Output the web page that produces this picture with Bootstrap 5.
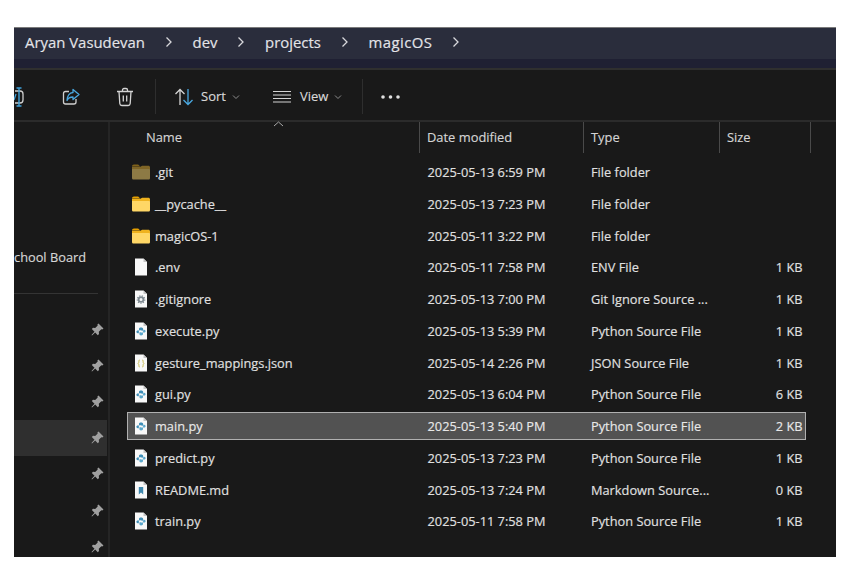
<!doctype html>
<html lang="en">
<head>
<meta charset="utf-8">
<title>magicOS</title>
<link rel="stylesheet" href="https://cdn.jsdelivr.net/npm/bootstrap@5.3.0/dist/css/bootstrap.min.css">
<style>
body{background:#fff;margin:0;overflow:hidden}
.win{margin:27px 20px 0 14px;width:822px;height:530px;background:#191919;color:#e0e0e0;font-family:"Open Sans","Noto Sans",sans-serif;font-size:12.8px;overflow:hidden;border-top:1px solid #7a7a7a;-webkit-text-stroke:.15px}
.crumbs{height:31px;background:#2a2d3c;color:#e4e4e8;font-size:14.9px;padding:0 0 3px 11px}
.crumbs svg{margin:0 19.800px;width:8px;height:12px}
.crumb-wide{letter-spacing:.45px}
.crumb-tail{height:9px;background:#1f2033}
.tools{height:54px;padding-top:3px;border-top:2px solid #2f2f2f;border-bottom:2px solid #2b2b2b;font-size:13px;color:#d8d8d8}
.tool-sep{width:1px;height:35px;background:#2e2e2e}
.t-clip{width:13px;height:20px}
.t-share{width:18px;height:18px;margin-left:35px}
.t-trash{width:18px;height:20px;margin-left:36px}
.t-sep1{margin:0 18px 0 21px}
.t-sort{width:20px;height:20px}
.t-lab{margin-left:7px}
.t-lab-view{margin-left:9px}
.t-chev{width:8px;height:6px;margin-left:6px}
.t-view{width:18px;height:14px;margin-left:33px}
.t-sep2{margin:0 18px 0 20px}
.t-dots{width:19px;height:4px}
.body-row{height:calc(100% - 94px)}
.side{width:96px;flex:none;border-right:2px solid #252525;color:#d6d6d6}
.side-name{height:21px;margin-top:126px;padding-right:22px;white-space:nowrap}
.side-rule{height:1px;background:#343434;margin:24px 10px 0 0}
.pins{margin-top:17px;margin-right:1px}
.pin-row{height:36.2px;padding-right:3px;flex:none}
.pin-row.on{background:#2f2f2f}
.pin-row svg{width:13px;height:13px}
.main{min-width:0;position:relative}
.head{display:grid;grid-template-columns:310px 164px 136px 91px;height:29px;font-size:12.9px;color:#d4d4d4}
.head>div{border-right:1px solid #4a4a4a;padding-left:7px;line-height:31px}
.head>div:first-child{padding-left:36px}
.sort-up{position:absolute;left:163px;top:-1px;width:11px;height:6px}
.list{padding:7px 0 0 17px;gap:3.77px}
.frow{display:grid;grid-template-columns:293px 163px 136px 87px;height:28px;line-height:26px;border:1px solid transparent;width:679px}
.frow.sel{background:#525252;border-color:#b0b0b0;color:#e8e8e8}
.cell-a{padding-left:4px;gap:5px;min-width:0}
.cell-a svg{width:18px;height:18px;flex:none}
.cell-b{padding-left:6.500px;white-space:nowrap}
.cell-b+.cell-b{padding-left:7px}
.cell-c{padding-right:4.500px;text-align:right}
</style>
</head>
<body>
<svg width="0" height="0" class="d-none" aria-hidden="true">
<defs>
<symbol id="folder" viewBox="0 0 18 18"><path d="M0 3.500C0 2.300.8 1.500 2 1.500h4.200l2 2H0z" fill="#e6a000"/><path d="M0 5h16.400c.9 0 1.600.7 1.600 1.600v8.300c0 .9-.7 1.600-1.600 1.600H1.600C.7 16.500 0 15.800 0 14.900z" fill="#ffd766"/><path d="M0 3.800h8.400l1.700-1.100h6.300c.9 0 1.600.7 1.600 1.600V6H0z" fill="#efb21e"/></symbol>
<symbol id="folder-dim" viewBox="0 0 18 18"><path d="M0 3.500C0 2.300.8 1.500 2 1.500h4.200l2 2H0z" fill="#80621a"/><path d="M0 5h16.400c.9 0 1.600.7 1.600 1.600v8.300c0 .9-.7 1.600-1.600 1.600H1.600C.7 16.500 0 15.800 0 14.900z" fill="#8d7a45"/><path d="M0 3.800h8.400l1.700-1.100h6.300c.9 0 1.600.7 1.600 1.600V6H0z" fill="#7f6526"/></symbol>
<symbol id="page" viewBox="0 0 18 18"><path d="M3 .5h8.500L15 4v13.500H3z" fill="#f8f8f8"/><path d="M11.500.5V4H15z" fill="#c4c4c4"/></symbol>
<symbol id="gear" viewBox="0 0 18 18"><use href="#page"/><circle cx="9" cy="9.500" r="2.400" fill="none" stroke="#7f8a92" stroke-width="1.800"/><circle cx="9" cy="9.500" r="3.800" fill="none" stroke="#7f8a92" stroke-width="1.100" stroke-dasharray="1.300 1.300"/></symbol>
<symbol id="py" viewBox="0 0 18 18"><use href="#page"/><path d="M9 5.500c-1.500 0-2 .6-2 1.400v1h2.500v.6H5.800c-.9 0-1.400.7-1.400 1.300s.5 1.400 1.400 1.400h1V9.800c0-.6.5-1 1.100-1h2.200c.6 0 1-.5 1-1V6.900c0-.8-.6-1.400-2.100-1.400z" fill="#3f8fb8"/><path d="M9 13.500c1.500 0 2-.6 2-1.400v-1H8.500v-.6h3.700c.9 0 1.400-.7 1.400-1.300s-.5-1.400-1.400-1.400h-1v1.200c0 .6-.5 1-1.100 1H8.400c-.6 0-1 .5-1 1v1.100c0 .8.4 1.400 1.600 1.400z" fill="#5ca8cc"/></symbol>
<symbol id="json" viewBox="0 0 18 18"><use href="#page"/><path d="M7.800 6c-1 0-.9.800-.9 1.500s-.1 1.500-.8 2c.7.500.8 1.300.8 2s-.1 1.500.9 1.500M10.200 6c1 0 .9.800.9 1.500s.1 1.500.8 2c-.7.500-.8 1.300-.8 2s.1 1.500-.9 1.500" fill="none" stroke="#c7b94a" stroke-width="1"/></symbol>
<symbol id="md" viewBox="0 0 18 18"><use href="#page"/><path d="M6.800 6h4.400v7.500L9 11.500l-2.200 2z" fill="#3f88ae"/></symbol>
<symbol id="pin" viewBox="0 0 13 13"><path d="M7.500.5l5 5-1.200 1-1-.2L7.800 8.800l.2 2.200-1.200 1.200-2.600-2.700L1 12.500l-.5-.5 3-3.300L.8 6 2 4.800l2.200.2L6.700 2.500l-.3-1z" fill="#a0a0a0"/></symbol>
<symbol id="chev" viewBox="0 0 8 6"><path d="M1 1.500l3 3 3-3" fill="none" stroke="#8c8c8c" stroke-width="1"/></symbol>
</defs>
</svg>

<div class="win">
  <div class="crumbs d-flex align-items-center">
    <span>Aryan Vasudevan</span>
    <svg viewBox="0 0 8 12"><path d="M1.500 1.500L6 6l-4.500 4.500" fill="none" stroke="#d8d8dc" stroke-width="1.300"/></svg>
    <span>dev</span>
    <svg viewBox="0 0 8 12"><path d="M1.500 1.500L6 6l-4.500 4.500" fill="none" stroke="#d8d8dc" stroke-width="1.300"/></svg>
    <span>projects</span>
    <svg viewBox="0 0 8 12"><path d="M1.500 1.500L6 6l-4.500 4.500" fill="none" stroke="#d8d8dc" stroke-width="1.300"/></svg>
    <span class="crumb-wide">magicOS</span>
    <svg viewBox="0 0 8 12"><path d="M1.500 1.500L6 6l-4.500 4.500" fill="none" stroke="#d8d8dc" stroke-width="1.300"/></svg>
  </div>
  <div class="crumb-tail"></div>
  <div class="tools d-flex align-items-center">
    <svg class="t-clip" viewBox="0 0 13 20"><path d="M1 4h5c2 0 3 1 3 3v6c0 2-1 3-3 3H1" fill="none" stroke="#cfcfcf" stroke-width="1.300"/><path d="M5 1v18M2.500 1h5M2.500 19h5" fill="none" stroke="#3fa0d8" stroke-width="1.400"/><path d="M0 13l2-6" stroke="#3fa0d8" stroke-width="1.300"/></svg>
    <svg class="t-share" viewBox="0 0 18 18"><path d="M7 3.500H3.500C2.300 3.500 1.500 4.300 1.500 5.500v8.500c0 1.200.8 2 2 2h8.500c1.200 0 2-.8 2-2v-3" fill="none" stroke="#cfcfcf" stroke-width="1.300"/><path d="M11 1.500l6 5-6 5V9c-3 0-5 1-6 3.500C5 8 7.500 4.500 11 4.500z" fill="none" stroke="#4aa8e0" stroke-width="1.300" stroke-linejoin="round"/></svg>
    <svg class="t-trash" viewBox="0 0 18 20"><path d="M1 4.500h16M6.500 4.500V3c0-1 .6-1.500 1.500-1.500h2c.9 0 1.500.5 1.500 1.500v1.500M3 4.500l.8 12c.1 1.200.9 2 2 2h6.400c1.100 0 1.900-.8 2-2l.8-12M7.300 8.500v6M10.700 8.500v6" fill="none" stroke="#d4d4d4" stroke-width="1.300"/></svg>
    <div class="tool-sep t-sep1"></div>
    <svg class="t-sort" viewBox="0 0 20 20"><path d="M6 18V2.500M1.500 7L6 2.500 10.500 7" fill="none" stroke="#d4d4d4" stroke-width="1.300"/><path d="M14 2v15.500M9.500 13l4.500 4.500 4.500-4.500" fill="none" stroke="#4aa8e0" stroke-width="1.300"/></svg>
    <span class="t-lab">Sort</span>
    <svg class="t-chev" viewBox="0 0 8 6"><use href="#chev"/></svg>
    <svg class="t-view" viewBox="0 0 18 14"><path d="M0 1.500h18M0 5h18M0 8.500h18M0 12h18" stroke="#d4d4d4" stroke-width="1.100"/></svg>
    <span class="t-lab-view">View</span>
    <svg class="t-chev" viewBox="0 0 8 6"><use href="#chev"/></svg>
    <div class="tool-sep t-sep2"></div>
    <svg class="t-dots" viewBox="0 0 19 4"><circle cx="2" cy="2" r="1.800" fill="#e0e0e0"/><circle cx="9.500" cy="2" r="1.800" fill="#e0e0e0"/><circle cx="17" cy="2" r="1.800" fill="#e0e0e0"/></svg>
  </div>
  <div class="body-row d-flex">
    <aside class="side">
      <div class="side-name text-end">chool Board</div>
      <div class="side-rule"></div>
      <div class="pins d-flex flex-column">
        <div class="pin-row d-flex align-items-center justify-content-end"><svg><use href="#pin"/></svg></div>
        <div class="pin-row d-flex align-items-center justify-content-end"><svg><use href="#pin"/></svg></div>
        <div class="pin-row d-flex align-items-center justify-content-end"><svg><use href="#pin"/></svg></div>
        <div class="pin-row on d-flex align-items-center justify-content-end"><svg><use href="#pin"/></svg></div>
        <div class="pin-row d-flex align-items-center justify-content-end"><svg><use href="#pin"/></svg></div>
        <div class="pin-row d-flex align-items-center justify-content-end"><svg><use href="#pin"/></svg></div>
        <div class="pin-row d-flex align-items-center justify-content-end"><svg><use href="#pin"/></svg></div>
      </div>
    </aside>
    <div class="main flex-grow-1">
      <svg class="sort-up" viewBox="0 0 11 6"><path d="M1 5l4.500-4L10 5" fill="none" stroke="#a8a8a8" stroke-width="1"/></svg>
      <div class="head"><div>Name</div><div>Date modified</div><div>Type</div><div>Size</div></div>
      <div class="list d-flex flex-column">
        <div class="frow"><div class="cell-a d-flex align-items-center"><svg><use href="#folder-dim"/></svg><span>.git</span></div><div class="cell-b">2025-05-13 6:59 PM</div><div class="cell-b">File folder</div><div class="cell-c"></div></div>
        <div class="frow"><div class="cell-a d-flex align-items-center"><svg><use href="#folder"/></svg><span>__pycache__</span></div><div class="cell-b">2025-05-13 7:23 PM</div><div class="cell-b">File folder</div><div class="cell-c"></div></div>
        <div class="frow"><div class="cell-a d-flex align-items-center"><svg><use href="#folder"/></svg><span>magicOS-1</span></div><div class="cell-b">2025-05-11 3:22 PM</div><div class="cell-b">File folder</div><div class="cell-c"></div></div>
        <div class="frow"><div class="cell-a d-flex align-items-center"><svg><use href="#page"/></svg><span>.env</span></div><div class="cell-b">2025-05-11 7:58 PM</div><div class="cell-b">ENV File</div><div class="cell-c">1 KB</div></div>
        <div class="frow"><div class="cell-a d-flex align-items-center"><svg><use href="#gear"/></svg><span>.gitignore</span></div><div class="cell-b">2025-05-13 7:00 PM</div><div class="cell-b">Git Ignore Source ...</div><div class="cell-c">1 KB</div></div>
        <div class="frow"><div class="cell-a d-flex align-items-center"><svg><use href="#py"/></svg><span>execute.py</span></div><div class="cell-b">2025-05-13 5:39 PM</div><div class="cell-b">Python Source File</div><div class="cell-c">1 KB</div></div>
        <div class="frow"><div class="cell-a d-flex align-items-center"><svg><use href="#json"/></svg><span>gesture_mappings.json</span></div><div class="cell-b">2025-05-14 2:26 PM</div><div class="cell-b">JSON Source File</div><div class="cell-c">1 KB</div></div>
        <div class="frow"><div class="cell-a d-flex align-items-center"><svg><use href="#py"/></svg><span>gui.py</span></div><div class="cell-b">2025-05-13 6:04 PM</div><div class="cell-b">Python Source File</div><div class="cell-c">6 KB</div></div>
        <div class="frow sel"><div class="cell-a d-flex align-items-center"><svg><use href="#py"/></svg><span>main.py</span></div><div class="cell-b">2025-05-13 5:40 PM</div><div class="cell-b">Python Source File</div><div class="cell-c">2 KB</div></div>
        <div class="frow"><div class="cell-a d-flex align-items-center"><svg><use href="#py"/></svg><span>predict.py</span></div><div class="cell-b">2025-05-13 7:23 PM</div><div class="cell-b">Python Source File</div><div class="cell-c">1 KB</div></div>
        <div class="frow"><div class="cell-a d-flex align-items-center"><svg><use href="#md"/></svg><span>README.md</span></div><div class="cell-b">2025-05-13 7:24 PM</div><div class="cell-b">Markdown Source...</div><div class="cell-c">0 KB</div></div>
        <div class="frow"><div class="cell-a d-flex align-items-center"><svg><use href="#py"/></svg><span>train.py</span></div><div class="cell-b">2025-05-11 7:58 PM</div><div class="cell-b">Python Source File</div><div class="cell-c">1 KB</div></div>
      </div>
    </div>
  </div>
</div>
<script src="https://cdn.jsdelivr.net/npm/bootstrap@5.3.0/dist/js/bootstrap.bundle.min.js"></script>
</body>
</html>
